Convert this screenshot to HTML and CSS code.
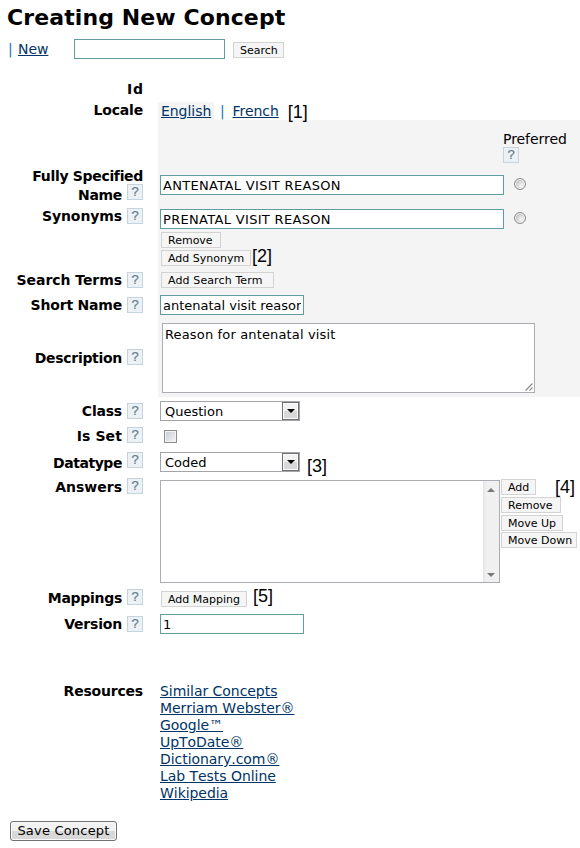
FILE: index.html
```html
<!DOCTYPE html>
<html lang="en">
<head>
<meta charset="utf-8">
<title>Creating New Concept</title>
<link rel="stylesheet" href="styles.css">
</head>
<body>
<h1>Creating New Concept</h1>
<div class="toolbar">
  <span class="bar">|</span><a class="new" href="#">New</a>
  <input class="text search" type="text"><button class="small search-btn">Search</button>
</div>
<form>
  <div class="row id"><div class="label"><b>Id</b></div></div>
  <div class="row locale"><div class="label"><b>Locale</b></div>
    <div class="field"><a class="tab active" href="#">English</a><span class="bar">|</span><a class="tab" href="#">French</a><span class="note">[1]</span></div></div>

  <div class="row shaded preferred"><div class="label"></div>
    <div class="field"><div class="pref">Preferred<span class="help">?</span></div></div></div>
  <div class="row shaded name"><div class="label"><b>Fully Specified</b><div class="second"><b>Name</b><span class="help">?</span></div></div>
    <div class="field"><input class="text wide" type="text" value="ANTENATAL VISIT REASON"><input class="radio" type="radio" name="preferred"></div></div>
  <div class="row shaded synonyms"><div class="label"><b>Synonyms</b><span class="help">?</span></div>
    <div class="field">
      <div class="line"><input class="text wide" type="text" value="PRENATAL VISIT REASON"><input class="radio" type="radio" name="preferred"></div>
      <button class="small remove">Remove</button>
      <div class="line"><button class="small add-syn">Add Synonym</button><span class="note">[2]</span></div>
    </div></div>
  <div class="row shaded terms"><div class="label"><b>Search Terms</b><span class="help">?</span></div>
    <div class="field"><button class="small add-term">Add Search Term</button></div></div>
  <div class="row shaded short"><div class="label"><b>Short Name</b><span class="help">?</span></div>
    <div class="field"><input class="text medium" type="text" value="antenatal visit reason"></div></div>
  <div class="row shaded description"><div class="label"><b>Description</b><span class="help">?</span></div>
    <div class="field"><div class="area"><span>Reason for antenatal visit</span><svg class="grip" width="8" height="8" viewBox="0 0 8 8"><path d="M.5 7.500l7-7M4.500 7.500l3-3" stroke="#888" stroke-width="1.100"/></svg></div></div></div>

  <div class="row class"><div class="label"><b>Class</b><span class="help">?</span></div>
    <div class="field"><div class="select"><span>Question</span><i class="arrow"><svg width="8" height="4" viewBox="0 0 8 4"><path d="M0 0h8L4 4z"/></svg></i></div></div></div>
  <div class="row isset"><div class="label"><b>Is Set</b><span class="help">?</span></div>
    <div class="field"><input class="check" type="checkbox"></div></div>
  <div class="row datatype"><div class="label"><b>Datatype</b><span class="help">?</span></div>
    <div class="field"><div class="select"><span>Coded</span><i class="arrow"><svg width="8" height="4" viewBox="0 0 8 4"><path d="M0 0h8L4 4z"/></svg></i></div><span class="note">[3]</span></div></div>
  <div class="row answers"><div class="label"><b>Answers</b><span class="help">?</span></div>
    <div class="field">
      <div class="list"><div class="scroll"><svg width="8" height="4" viewBox="0 0 8 4"><path d="M4 0l4 4H0z"/></svg><svg width="8" height="4" viewBox="0 0 8 4"><path d="M0 0h8L4 4z"/></svg></div></div>
      <div class="actions"><button class="small add" type="button">Add</button><button class="small remove" type="button">Remove</button><button class="small up" type="button">Move Up</button><button class="small down" type="button">Move Down</button></div>
      <span class="note">[4]</span>
    </div></div>
  <div class="row mappings"><div class="label"><b>Mappings</b><span class="help">?</span></div>
    <div class="field"><button class="small add-map">Add Mapping</button><span class="note">[5]</span></div></div>
  <div class="row version"><div class="label"><b>Version</b><span class="help">?</span></div>
    <div class="field"><input class="text medium" type="text" value="1"></div></div>
  <div class="row resources"><div class="label"><b>Resources</b></div>
    <div class="field links"><a href="#">Similar Concepts</a><a href="#">Merriam Webster®</a><a href="#">Google™</a><a href="#">UpToDate®</a><a href="#">Dictionary.com®</a><a href="#">Lab Tests Online</a><a href="#">Wikipedia</a></div></div>
  <button class="save" type="button">Save Concept</button>
</form>
</body>
</html>
```
FILE: styles.css
```css
* { box-sizing: border-box; }
body {
  margin: 0;
  width: 580px;
  height: 848px;
  overflow: hidden;
  background: #fff;
  color: #000;
  font: 14px/18px "DejaVu Sans", Verdana, sans-serif;
  letter-spacing: -0.2px;
}
h1 { margin: 0; padding: 4px 0 0 7px; height: 39px; font-size: 22px; line-height: 27px; letter-spacing: 0.1px; white-space: nowrap; }
a { color: #036; text-decoration: underline; letter-spacing: -0.05px; }
input, button { margin: 0; font-family: inherit; }
.bar { color: #1a73b4; }
.toolbar { display: flex; height: 41px; padding-left: 8px; align-items: flex-start; }
.toolbar .bar { margin-top: 1px; width: 10px; }
.new { margin-top: 1px; width: 56px; }
.text { height: 20px; padding: 0 2px; border: 1px solid #5f9ea0; border-radius: 0; background: #fff; font-size: 13px; color: #000; outline: 0; flex: none; }
.search { width: 151px; }
.search-btn { width: 51px; margin: 3px 0 0 8px; }
.small { display: block; flex: none; height: 16px; padding: 1px 0 0 6px; border: 1px solid #d3d3d3; background: #f5f5f5; color: #000; font-size: 11px; line-height: 13px; letter-spacing: 0; text-align: left; white-space: nowrap; }

.row { display: flex; align-items: stretch; }
.label { width: 143px; flex: none; display: flex; justify-content: flex-end; align-items: flex-start; text-align: right; white-space: nowrap; }
.label b { flex: none; }
.help { display: block; flex: none; width: 16px; height: 16px; margin-left: 5px; border: 1px solid #c5d3dc; background: #ebf1f5; color: #667c89; font: 13px/14px "Liberation Sans", sans-serif; letter-spacing: 0; text-align: center; -webkit-text-stroke: .2px #667c89; }
.field { flex: 1; margin-left: 15px; padding-left: 2px; display: flex; align-items: flex-start; }
.shaded .field { background: #f4f4f4; }
.line { display: flex; }
.note { position: relative; font: 18px/20px "Liberation Sans", sans-serif; letter-spacing: 0; }
.wide { width: 344px; letter-spacing: 0.32px; }
.medium { width: 144px; }

.id { height: 21px; }
.id b { letter-spacing: 0.8px; margin-right: -0.8px; }
.locale { height: 19px; }
.locale .field { padding-left: 0; }
.tab { height: 18px; margin-top: 1px; padding: 0 3px; }
.tab.active { background: #f4f4f4; width: 56px; }
.locale .bar { margin: 1px 5px 0 6px; }
.locale .note { margin: 1px 0 0 6px; }

.preferred { height: 46px; }
.pref { margin: 10px 0 0 343px; letter-spacing: -0.05px; }
.pref .help { margin: -1px 0 0; }

.name { height: 39px; }
.name .label { flex-direction: column; justify-content: flex-start; align-items: flex-end; padding-top: 1px; letter-spacing: -0.32px; }
.name b { line-height: 19px; }
.second { display: flex; }
.name .help { margin-top: -2px; }
.name .field { padding-top: 9px; }
.radio { appearance: none; flex: none; width: 12px; height: 12px; margin: 3px 0 0 10px; border: 1px solid #8b8b8b; border-radius: 50%; background: radial-gradient(circle at 65% 65%, #eee 15%, #c6c9cc 60%); box-shadow: inset 0 0 0 1px #f5f5f5; }

.synonyms { height: 65px; }
.synonyms .label { padding-top: 2px; letter-spacing: -0.1px; }
.synonyms .help { margin-top: 1px; }
.synonyms .field { flex-direction: column; padding-top: 4px; }
.remove { width: 60px; }
.synonyms .small { margin: 3px 0 2px 1px; }
.synonyms .add-syn { width: 90px; margin-top: 0; }
.synonyms .note { margin: -4px 0 0 1px; }

.terms { height: 24px; }
.terms .label { padding-top: 1px; letter-spacing: -0.05px; }
.terms .help { margin-top: 1px; }
.terms .field { padding-top: 2px; }
.add-term { width: 113px; margin-left: 1px; letter-spacing: 0.12px; }

.short { height: 25px; }
.short .label { padding-top: 2px; }
.short .help { margin-top: 1px; }
.short .field { padding-top: 1px; }

.description { height: 78px; }
.description .label { padding-top: 30px; letter-spacing: -0.3px; }
.description .field { padding: 4px 0 0 4px; }
.area { position: relative; width: 373px; height: 70px; border: 1px solid #abadb3; background: #fff; font-size: 13px; letter-spacing: 0.15px; padding: 2px; }
.grip { position: absolute; right: 1px; bottom: 1px; fill: none; }

.class { height: 27px; padding-top: 4px; }
.class .label { padding-top: 1px; }
.class .help { margin-top: 1px; }
.select { display: flex; justify-content: space-between; width: 140px; height: 20px; padding-left: 4px; border: 1px solid #a3a5aa; background: #fff; font-size: 13px; letter-spacing: 0; line-height: 19px; }
.arrow { display: flex; align-items: center; justify-content: center; width: 17px; height: 18px; border: 1px solid #707070; background: linear-gradient(#f2f2f2 50%, #d8d8d8 50%); box-shadow: inset 0 0 0 1px #fafafa; }

.isset { height: 25px; }
.isset .label { padding-top: 3px; letter-spacing: 0.1px; }
.isset .field { padding: 6px 0 0 6px; }
.check { appearance: none; width: 13px; height: 13px; border: 1px solid #8b8d90; background: linear-gradient(135deg, #c5c9cf, #f6f6f6); background-clip: content-box; padding: 1px; box-shadow: inset 0 0 0 1px #f3f3f3; }

.datatype { height: 28px; }
.datatype .label { padding-top: 3px; letter-spacing: -0.45px; }
.datatype b { margin-top: 2px; }
.datatype .field { padding-top: 3px; }
.datatype .note { margin: 4px 0 0 7px; }

.answers { height: 108px; }
.answers .label { padding-top: 1px; letter-spacing: 0; }
.answers .field { padding-top: 3px; }
.list { display: flex; justify-content: flex-end; width: 340px; height: 103px; border: 1px solid #abadb3; background: #fff; }
.scroll { display: flex; flex-direction: column; justify-content: space-between; align-items: center; width: 16px; padding: 7px 0 5px; background: linear-gradient(90deg, #e4e4e4, #f0f0f0 20%); fill: #777; }
.actions { display: flex; flex-direction: column; width: 76px; margin: -1px -22px 0 1px; gap: 2px; }
.add { width: 35px; }
.up { width: 62px; }
.down { width: 76px; margin-top: -1px; }
.answers .note { margin-top: -3px; }

.mappings { height: 25px; }
.mappings .label { padding-top: 4px; letter-spacing: -0.3px; }
.mappings .field { padding-top: 4px; }
.add-map { width: 86px; margin: 2px 0 0 1px; }
.mappings .note { margin: -3px 0 0 6px; }

.version { height: 72px; }
.version .label { padding-top: 5px; }
.version .help { margin-top: 1px; }
.version .field { padding-top: 4px; }

.resources { height: 139px; }
.links { flex-direction: column; line-height: 17px; padding-top: 1px; font-kerning: none; }
.save { display: block; width: 107px; height: 20px; margin-left: 10px; padding: 0; border: 1px solid #707070; border-radius: 3px; background: linear-gradient(#f2f2f2 50%, #d8d8d8 50%); box-shadow: inset 0 0 0 1px #fafafa; color: #000; font-size: 13px; line-height: 18px; letter-spacing: 0.2px; text-align: center; white-space: nowrap; }
```
